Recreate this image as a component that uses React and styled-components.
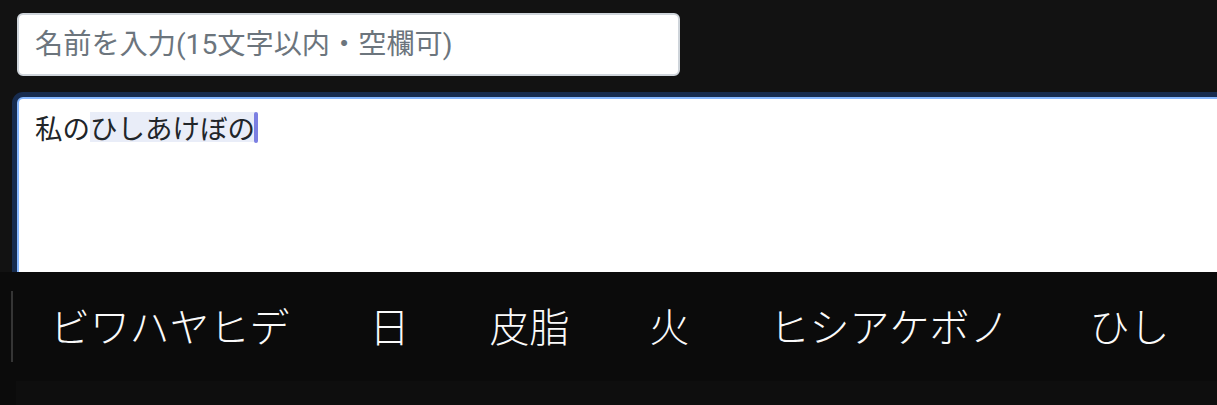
import React from 'react'
import styled, { createGlobalStyle } from 'styled-components'

const GlobalStyle = createGlobalStyle`
  html, body {
    margin: 0;
    background: #121212;
    overflow: hidden;
  }
  * {
    box-sizing: border-box;
  }
`

const jpFont = `"Noto Sans CJK JP", "Noto Sans", sans-serif`

const Page = styled.div`
  display: flex;
  flex-direction: column;
  align-items: flex-start;
  gap: 21px;
  padding: 13px 0 0 17px;
  font-family: ${jpFont};
`

const NameInput = styled.input`
  width: 663px;
  height: 63px;
  padding: 0 16px;
  border: 2px solid #ced4da;
  border-radius: 6px;
  background: #fff;
  color: #212529;
  font-family: Roboto, ${jpFont};
  font-size: 28.2px;
  outline: none;
  &::placeholder {
    color: #6c757d;
  }
`

const Editor = styled.div`
  width: 1300px;
  height: 260px;
  padding: 13px 16px;
  border: 2px solid #86b7fe;
  border-radius: 6px;
  background: #fff;
  box-shadow: 0 0 0 5px #172c4f;
  color: #212529;
  font-size: 27.5px;
  line-height: 30px;
`

const Marked = styled.span`
  display: inline-block;
  height: 30px;
  background: #e9edf8;
`

const Caret = styled.span`
  display: inline-block;
  width: 4px;
  height: 31px;
  margin-left: -1px;
  border-radius: 2px;
  background: #7b7fe2;
  vertical-align: top;
`

const CandidateBar = styled.div`
  position: fixed;
  top: 272px;
  left: 0;
  right: 0;
  bottom: 0;
  display: flex;
  flex-direction: column;
  background: #0b0b0b;
  font-family: ${jpFont};
`

const CandidateRow = styled.div`
  display: flex;
  align-items: center;
  height: 109px;
  padding-left: 11px;
`

const Divider = styled.div`
  width: 2px;
  height: 71px;
  background: #353535;
`

const CandidateList = styled.div`
  display: flex;
  gap: 80px;
  padding-left: 37px;
  margin-top: -4px;
`

const Candidate = styled.span`
  color: #fafafa;
  font-size: 40px;
  font-weight: 300;
  line-height: 1;
  white-space: nowrap;
`

const BottomStrip = styled.div`
  flex: 1;
  margin-left: 16px;
  background: #0e0e0e;
`

const candidates = ['ビワハヤヒデ', '日', '皮脂', '火', 'ヒシアケボノ', 'ひし']

const App = () => (
  <>
    <GlobalStyle />
    <Page>
      <NameInput placeholder="名前を入力(15文字以内・空欄可)" />
      <Editor>
        私の<Marked>ひしあけぼの</Marked>
        <Caret />
      </Editor>
    </Page>
    <CandidateBar>
      <CandidateRow>
        <Divider />
        <CandidateList>
          {candidates.map((c) => (
            <Candidate key={c}>{c}</Candidate>
          ))}
        </CandidateList>
      </CandidateRow>
      <BottomStrip />
    </CandidateBar>
  </>
)

export default App
